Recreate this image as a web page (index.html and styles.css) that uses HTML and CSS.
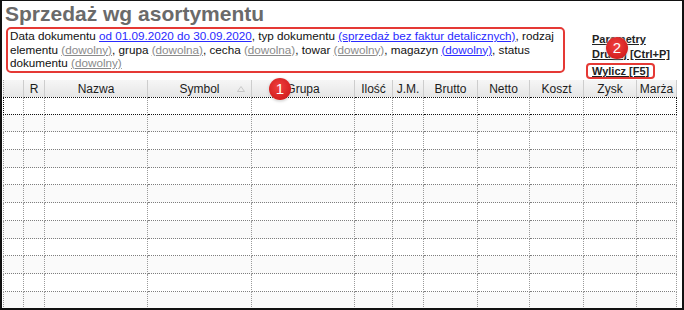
FILE: index.html
```html
<!DOCTYPE html>
<html lang="pl">
<head>
  <meta charset="UTF-8">
  <title>Sprzedaż wg asortymentu</title>
  <link rel="stylesheet" href="styles.css">
</head>
<body>
  <div class="frame">
    <div class="top">
      <div class="main">
        <h1>Sprzedaż wg asortymentu</h1>
        <div class="filters">
          Data dokumentu <a class="blue" href="#">od 01.09.2020 do 30.09.2020</a>, typ dokumentu <a class="blue" href="#">(sprzedaż bez faktur detalicznych)</a>, rodzaj elementu <a class="gray" href="#">(dowolny)</a>, grupa <a class="gray" href="#">(dowolna)</a>, cecha <a class="gray" href="#">(dowolna)</a>, towar <a class="gray" href="#">(dowolny)</a>, magazyn <a class="blue" href="#">(dowolny)</a>, status dokumentu <a class="gray" href="#">(dowolny)</a>
        </div>
      </div>
      <div class="actions">
        <a href="#">Parametry</a>
        <a href="#">Drukuj [Ctrl+P]</a>
        <a href="#" class="marked">Wylicz [F5]</a>
      </div>
    </div>

    <!-- Results grid -->
    <table class="grid">
      <thead>
        <tr>
          <th class="c0"></th>
          <th class="c1">R</th>
          <th class="c2">Nazwa</th>
          <th class="c3">Symbol <svg class="sort" width="8" height="6" viewBox="0 0 8 6"><path d="M0.5 5.5 L4 0.5 L7.5 5.5 Z" fill="none" stroke="#c8c8c8"/></svg></th>
          <th class="c4">Grupa</th>
          <th class="c5">Ilość</th>
          <th class="c6">J.M.</th>
          <th class="c7">Brutto</th>
          <th class="c8">Netto</th>
          <th class="c9">Koszt</th>
          <th class="c10">Zysk</th>
          <th class="c11">Marża</th>
        </tr>
      </thead>
      <tbody id="rows"></tbody>
    </table>

    <!-- annotation markers -->
    <span class="badge badge-1">1</span>
    <span class="badge badge-2">2</span>
  </div>

  <script>
    // empty rows of the grid
    const body = document.getElementById("rows");
    for (let i = 0; i < 12; i++) {
      const tr = document.createElement("tr");
      if (i === 0) tr.className = "current";
      for (let c = 0; c < 12; c++) {
        tr.appendChild(document.createElement("td"));
      }
      body.appendChild(tr);
    }
  </script>
</body>
</html>
```

FILE: styles.css
```css
body {
  margin: 0;
  padding: 0;
  background: #fff;
  font-family: 'Liberation Sans', Arial, sans-serif;
}

.frame {
  position: relative;
  width: 684px;
  height: 310px;
  box-sizing: border-box;
  border: 2px solid #111;
  border-top-width: 1px;
  overflow: hidden;
  background: #fff;
}

.top {
  display: flex;
  gap: 27px;
  height: 79px;
}

.main {
  padding-left: 3px;
}

h1 {
  margin: 2px 0 0 0;
  font-size: 21px;
  line-height: 22px;
  font-weight: bold;
  color: #6a6a6a;
}

.filters {
  width: 559px;
  height: 46px;
  box-sizing: border-box;
  margin: 2px 0 0 1px;
  padding: 0 3px 0 2px;
  border: 2px solid #e53935;
  border-radius: 5px;
  font-size: 11.7px;
  line-height: 13.5px;
  color: #111;
}

.filters a {
  text-decoration: underline;
}

.filters .blue {
  color: #2a2aff;
}

.filters .gray {
  color: #8a8a8a;
}

.actions {
  display: flex;
  flex-direction: column;
  align-items: flex-start;
  padding-top: 31px;
}

.actions a {
  font-size: 11px;
  line-height: 15px;
  font-weight: bold;
  color: #222;
  text-decoration: underline;
}

.actions .marked {
  margin: 1px 0 0 -6px;
  padding: 0 4px;
  line-height: 12px;
  border: 2px solid #e53935;
  border-radius: 4px;
}

/* grid */
.grid {
  margin-left: 1px;
  border-collapse: separate;
  border-spacing: 0;
  table-layout: fixed;
  width: 674px;
  font-size: 12px;
}

.grid th {
  height: 17px;
  padding: 0;
  box-sizing: border-box;
  font-weight: normal;
  color: #1c1c1c;
  background: linear-gradient(#f6f6f6, #e6e6e6);
  border-right: 1px solid #cdcdcd;
  white-space: nowrap;
  position: relative;
}

.grid th:first-child {
  border-left: 1px dotted #999;
}

.grid .sort {
  position: absolute;
  right: 6px;
  top: 6px;
}

.grid td {
  height: 17.7px;
  padding: 0;
  box-sizing: border-box;
  border-right: 1px dotted #9a9a9a;
  border-bottom: 1px dotted #7d7d7d;
}

.grid td:first-child {
  border-left: 1px dotted #999;
}

.grid tbody tr:nth-child(even) td {
  background: #fafafa;
}

.grid tr.current td {
  border-top: 1px dotted #111;
  border-bottom-color: #111;
}

.grid tr.current td:first-child {
  border-left-color: #111;
}

.grid tr.current td:last-child {
  border-right-color: #111;
}

.c0 { width: 21px; }
.c1 { width: 21px; }
.c2 { width: 103px; }
.c3 { width: 104px; }
.c4 { width: 103px; }
.c5 { width: 38px; }
.c6 { width: 31px; }
.c7 { width: 54px; }
.c8 { width: 52px; }
.c9 { width: 54px; }
.c10 { width: 53px; }
.c11 { width: 40px; }

.badge {
  position: absolute;
  width: 22px;
  height: 22px;
  border-radius: 50%;
  background: radial-gradient(circle at 45% 40%, #f04040, #d42020 70%, #c01818);
  box-shadow: 0 0 2px rgba(255, 255, 255, 0.9), 0 1px 3px rgba(0, 0, 0, 0.25);
  color: #fff;
  font-size: 15px;
  line-height: 22px;
  text-align: center;
}

.badge-1 {
  left: 267px;
  top: 77px;
}

.badge-2 {
  left: 604px;
  top: 36px;
}
```
